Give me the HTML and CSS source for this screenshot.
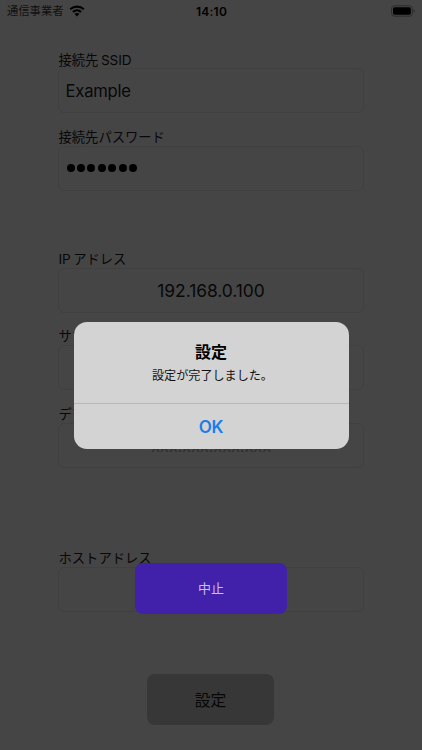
FILE: index.html
```html
<!DOCTYPE html>
<html lang="ja">
<head>
<meta charset="utf-8">
<meta name="viewport" content="width=device-width, initial-scale=1">
<title>設定</title>
<link rel="stylesheet" href="styles.css">
</head>
<body>
<div class="screen">
  <header class="status">
    <div class="carrier">
      <span>通信事業者</span>
      <svg class="wifi" viewBox="0 0 16 12" aria-hidden="true">
        <path d="M1.2 4.3C5.1.7 10.9.7 14.8 4.3" />
        <path d="M3.9 7C6.2 4.9 9.8 4.9 12.1 7" />
        <path class="wifi-dot" d="M5.5 8.8C6.9 7.6 9.1 7.6 10.5 8.8L8 11.4Z" />
      </svg>
    </div>
    <div class="time">14:10</div>
    <svg class="battery" viewBox="0 0 26 12" aria-hidden="true">
      <rect class="battery-case" x=".6" y=".6" width="21.6" height="10.8" rx="3" />
      <rect x="2.1" y="2.1" width="18.6" height="7.8" rx="1.7" />
      <path class="battery-cap" d="M23.4 4.2Q24.7 4.7 24.7 6T23.4 7.8Z" />
    </svg>
  </header>
  <main class="form">
    <section class="group">
      <div class="item"><div class="label ssid">接続先<span class="latin after">SSID</span></div><div class="field left">Example</div></div>
      <div class="item"><div class="label">接続先パスワード</div><div class="field left"><div class="dots"><i></i><i></i><i></i><i></i><i></i><i></i><i></i></div></div></div>
    </section>
    <section class="group network">
      <div class="item"><div class="label"><span class="latin before">IP</span>アドレス</div><div class="field address">192.168.0.100</div></div>
      <div class="item"><div class="label">サブネットマスク</div><div class="field"></div></div>
      <div class="item"><div class="label">デフォルトゲートウェイ</div><div class="field placeholder">xxx.xxx.xxx.xxx</div></div>
    </section>
    <section class="group host">
      <div class="item"><div class="label">ホストアドレス</div><div class="field"></div></div>
    </section>
    <button class="submit">設定</button>
  </main>
  <button class="cancel">中止</button>
  <div class="alert" role="alertdialog">
    <div class="alert-body">
      <h1>設定</h1>
      <p>設定が完了しました。</p>
    </div>
    <button class="ok">OK</button>
  </div>
</div>
</body>
</html>
```

FILE: styles.css
```css
* { box-sizing: border-box; }

body {
  margin: 0;
  background: #454545;
  color: #080808;
  font-family: Inter, "Noto Sans CJK JP", sans-serif;
}

button {
  border: 0;
  padding: 0;
  font-family: inherit;
}

.screen {
  position: relative;
  width: 422px;
  height: 750px;
  overflow: hidden;
}

.status {
  display: grid;
  grid-template-columns: 1fr auto 1fr;
  align-items: center;
  height: 22px;
  padding: 0 6px 0 7px;
  color: #000;
}

.carrier {
  display: flex;
  align-items: center;
  gap: 5px;
  font-size: 11.3px;
  line-height: 20px;
  color: #111;
}

.wifi {
  width: 16px;
  height: 12px;
  margin-top: -1px;
  fill: none;
  stroke: #000;
  stroke-width: 2.2;
}

.wifi-dot { fill: #000; stroke: none; }

.time {
  font-size: 12px;
  font-weight: 600;
  letter-spacing: .25px;
}

.battery {
  justify-self: end;
  width: 25px;
  height: 12px;
  margin-top: -1px;
}

.battery-case { fill: none; stroke: #2b2b2b; stroke-width: 1; }
.battery-cap { fill: #2b2b2b; }

.form {
  display: flex;
  flex-direction: column;
  width: 306px;
  margin: 29px 0 0 58px;
}

.group {
  display: flex;
  flex-direction: column;
  gap: 15.5px;
}

.network { margin-top: 60px; }
.host { margin-top: 82.5px; }

.label {
  height: 17px;
  padding-left: .5px;
  font-size: 13.3px;
  line-height: 17px;
  white-space: pre;
}

.ssid { line-height: 18px; }

.latin {
  font-size: 13.6px;
  letter-spacing: -.1px;
}

.after { margin-left: 2.5px; }
.before { margin-right: 2.5px; }

.field {
  display: flex;
  align-items: center;
  justify-content: center;
  height: 45px;
  padding-top: 1px;
  border: 1px solid #404040;
  border-radius: 6px;
  font-size: 16.6px;
  letter-spacing: -.2px;
}

.address {
  font-size: 17.4px;
  letter-spacing: -.03px;
}

.left {
  justify-content: flex-start;
  padding-left: 6.5px;
}

.placeholder { color: #303030; }

.dots {
  display: flex;
  gap: 2.45px;
  margin-top: -1px;
  padding-left: 1px;
}

.dots i {
  width: 8px;
  height: 8px;
  border-radius: 50%;
  background: #000;
}

.submit {
  align-self: center;
  width: 127px;
  height: 51px;
  margin: 62px 1px 0 0;
  border-radius: 8px;
  background: #373737;
  color: #080808;
  font-size: 15.8px;
}

.cancel {
  position: absolute;
  left: 135px;
  top: 563px;
  width: 152px;
  height: 51px;
  padding-bottom: 2px;
  border-radius: 8px;
  background: #4221aa;
  color: #c9bee8;
  font-size: 13px;
}

.alert {
  position: absolute;
  left: 73.5px;
  top: 321.5px;
  display: flex;
  flex-direction: column;
  width: 275px;
  height: 127px;
  overflow: hidden;
  border-radius: 13px;
  background: #d3d3d3;
  color: #000;
  text-align: center;
}

.alert-body {
  height: 82.5px;
  padding-top: 19.5px;
  border-bottom: 1px solid #b8b8b8;
}

h1 {
  margin: 0;
  font-size: 16px;
  font-weight: 700;
  line-height: 23px;
}

p {
  margin: 3px 0 0 3px;
  font-size: 12.1px;
  line-height: 18px;
  color: #111;
}

.ok {
  flex: 1;
  padding-top: 1px;
  background: transparent;
  color: #177eea;
  font-size: 17px;
  font-weight: 600;
  letter-spacing: -.3px;
}
```
